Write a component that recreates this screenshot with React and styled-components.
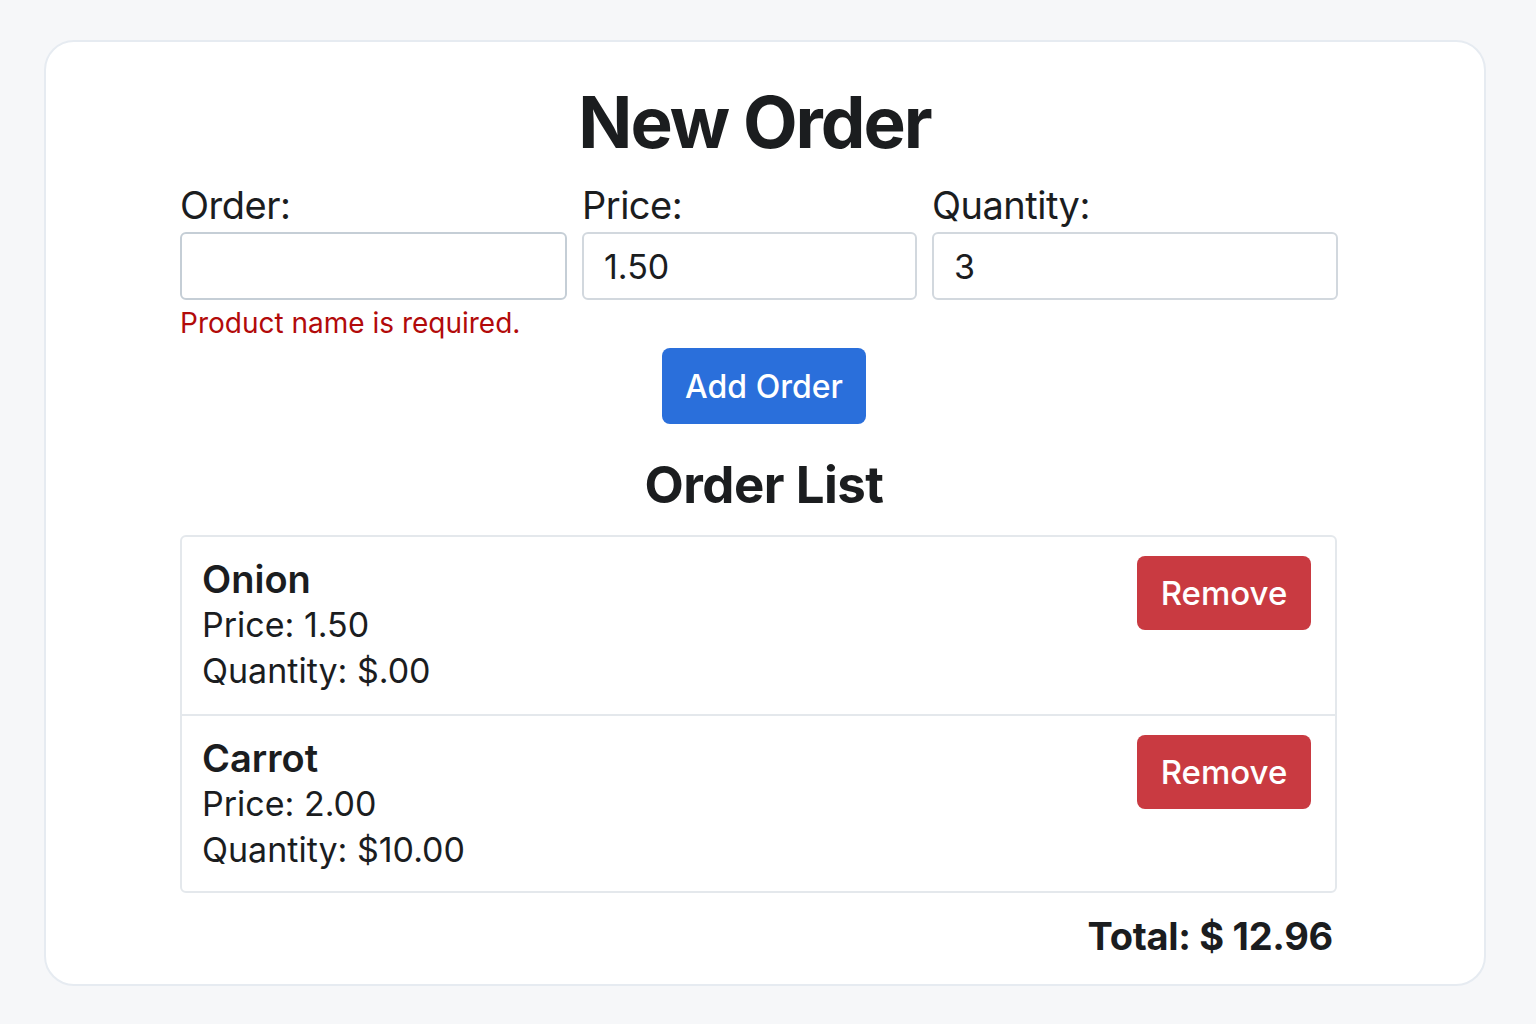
import React, { useState } from "react";
import styled, { createGlobalStyle } from "styled-components";

const GlobalStyle = createGlobalStyle`
  body {
    margin: 0;
    background: #f6f7f9;
    font-family: Inter, "Noto Sans", sans-serif;
    color: #1b1d1f;
  }
`;

const Page = styled.div`
  height: 1024px;
  padding: 40px 50px 38px 44px;
  box-sizing: border-box;
`;

const Card = styled.div`
  height: 100%;
  box-sizing: border-box;
  background: #fff;
  border: 2px solid #e6ebf1;
  border-radius: 30px;
  padding: 37px 147px 0 134px;
  display: flex;
  flex-direction: column;
`;

const Title = styled.h1`
  margin: 0;
  text-align: center;
  font-size: 71px;
  font-weight: 700;
  line-height: 86px;
  letter-spacing: -2px;
  padding-right: 8px;
`;

const FormGrid = styled.div`
  display: grid;
  grid-template-columns: 387px 335px 406px;
  column-gap: 15px;
  margin-top: 17px;
`;

const Field = styled.div`
  display: flex;
  flex-direction: column;
`;

const Label = styled.label`
  font-size: 38px;
  line-height: 46px;
  margin-bottom: 4px;
  letter-spacing: -0.5px;
`;

const Input = styled.input`
  height: 68px;
  box-sizing: border-box;
  border: 2px solid ${(p) => (p.$error ? "#c5ced6" : "#d2d8de")};
  border-radius: 6px;
  padding: 0 20px;
  font-family: inherit;
  font-size: 34px;
  color: #1b1d1f;
  outline: none;
`;

const ErrorText = styled.div`
  color: #b20a0a;
  font-size: 28px;
  line-height: 34px;
  margin-top: 6px;
`;

const Center = styled.div`
  display: flex;
  justify-content: center;
  margin-top: 8px;
  padding-left: 11px;
`;

const Button = styled.button`
  border: none;
  font-family: inherit;
  color: #fff;
  cursor: pointer;
  border-radius: 8px;
  background: ${(p) => p.$bg};
  width: ${(p) => p.$w}px;
  height: ${(p) => p.$h}px;
  font-size: ${(p) => p.$fs}px;
  font-weight: 500;
  padding: 0;
`;

const SubTitle = styled.h2`
  margin: 31px 0 0;
  padding-left: 11px;
  text-align: center;
  font-size: 51px;
  line-height: 60px;
  font-weight: 700;
  letter-spacing: -0.5px;
`;

const List = styled.div`
  margin-top: 20px;
  border: 2px solid #e4e8ec;
  border-radius: 6px;
`;

const Row = styled.div`
  display: flex;
  justify-content: space-between;
  align-items: flex-start;
  height: 177px;
  box-sizing: border-box;
  padding: 19px 24px 0 20px;
  & + & {
    border-top: 2px solid #e4e8ec;
  }
`;

const Info = styled.div`
  display: flex;
  flex-direction: column;
`;

const Name = styled.div`
  font-size: 38px;
  font-weight: 600;
  line-height: 46px;
`;

const Line = styled.div`
  font-size: 34px;
  line-height: 46px;
`;

const Total = styled.div`
  text-align: right;
  font-size: 38px;
  font-weight: 700;
  margin-top: 20px;
  padding-right: 4px;
  letter-spacing: -0.3px;
`;

const initial = [
  { id: 1, name: "Onion", price: "1.50", qty: "$.00" },
  { id: 2, name: "Carrot", price: "2.00", qty: "$10.00" },
];

export default function App() {
  const [orders, setOrders] = useState(initial);
  const [name, setName] = useState("");
  const [price, setPrice] = useState("1.50");
  const [qty, setQty] = useState("3");

  return (
    <Page>
      <GlobalStyle />
      <Card>
        <Title>New Order</Title>
        <FormGrid>
          <Field>
            <Label>Order:</Label>
            <Input $error value={name} onChange={(e) => setName(e.target.value)} />
            <ErrorText>Product name is required.</ErrorText>
          </Field>
          <Field>
            <Label>Price:</Label>
            <Input value={price} onChange={(e) => setPrice(e.target.value)} />
          </Field>
          <Field>
            <Label>Quantity:</Label>
            <Input value={qty} onChange={(e) => setQty(e.target.value)} />
          </Field>
        </FormGrid>
        <Center>
          <Button $bg="#2a6fdb" $w={204} $h={76} $fs={32}>
            Add Order
          </Button>
        </Center>
        <SubTitle>Order List</SubTitle>
        <List>
          {orders.map((o) => (
            <Row key={o.id}>
              <Info>
                <Name>{o.name}</Name>
                <Line>Price: {o.price}</Line>
                <Line>Quantity: {o.qty}</Line>
              </Info>
              <Button
                $bg="#c93a41"
                $w={174}
                $h={74}
                $fs={33}
                onClick={() => setOrders(orders.filter((x) => x.id !== o.id))}
              >
                Remove
              </Button>
            </Row>
          ))}
        </List>
        <Total>Total: $ 12.96</Total>
      </Card>
    </Page>
  );
}
